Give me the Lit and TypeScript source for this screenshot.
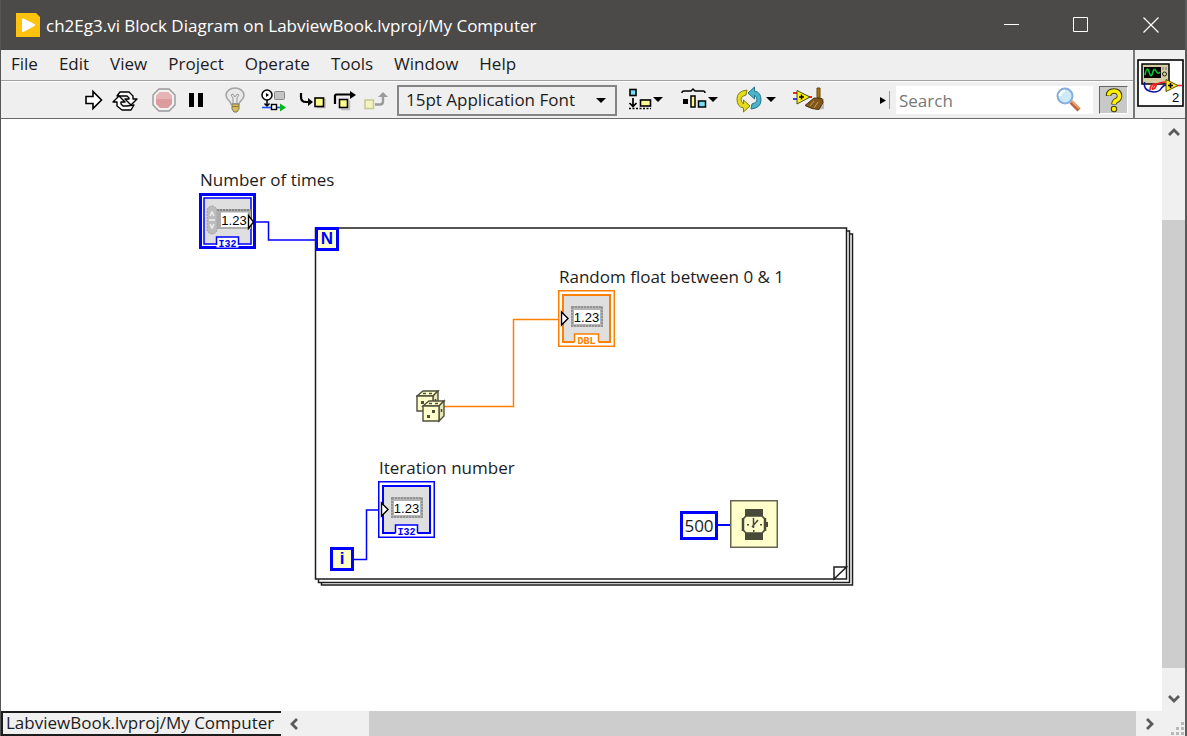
import { LitElement, html, svg, css } from "lit";
import { customElement, property } from "lit/decorators.js";

const MENUS = ["File", "Edit", "View", "Project", "Operate", "Tools", "Window", "Help"];

const caret = (x: number) => svg`<path d="M${x} 11h10l-5 5z" fill="#000"/>`;

const ICONS: Record<string, unknown> = {
  run: svg`<path d="M9 10.500h7v-5l8.500 8.500-8.500 8.500v-5H9z" fill="#fff" stroke="#000" stroke-width="1.6"/>`,
  cont: svg`<g fill="#fff" stroke="#000" stroke-width="1.4" stroke-linejoin="round">
    <path d="M8 10l3-4h9l4 4v3h4l-6 6-6-6h4v-1l-2-2h-4z"/>
    <path d="M25 19l-3 5h-9l-5-4v-4H4l6-6 6 6h-4v2l2 2h4z"/></g>`,
  abort: svg`<path d="M11 3h10l6 6v10l-6 6H11l-6-6V9z" fill="#f2f2f2" stroke="#999" stroke-width="1.4"/>
    <path d="M12 6h8l4 4v8l-4 4h-8l-4-4v-8z" fill="#dc9c9e"/><path d="M12 6h8l4 4v3H8v-3z" fill="#e6b4b5"/>`,
  pause: svg`<path d="M9 7h5v14H9zM18 7h5v14h-5z" fill="#000"/>`,
  bulb: svg`<path d="M12 18c0-3-5-4-5-9a9 7 0 0 1 18 0c0 5-5 6-5 9z" fill="#e9e9e9" stroke="#a3a3a3" stroke-width="1.6"/>
    <path d="M14 17v-5l-2-3 2-1 2 3 2-3 2 1-2 3v5" fill="none" stroke="#999"/>
    <path d="M13 18h7v5l-2 3h-3l-2-3z" fill="#d8bd4c" stroke="#777"/><path d="M13 20.500h7" stroke="#8a7a3a"/>`,
  retain: svg`<circle cx="9" cy="9" r="5" fill="#fff" stroke="#000" stroke-width="1.500"/><path d="M8 7v4l3-2z" fill="#000"/>
    <rect x="16.500" y="5.500" width="10" height="8" rx="1" fill="#c4c4c4" stroke="#888"/>
    <path d="M9 14v6M6.500 17.500L9 20l2.500-2.500" fill="none" stroke="#000" stroke-width="1.500"/>
    <path d="M4 21.500h20" stroke="#1f4fff" stroke-width="1.600"/>
    <rect x="13.500" y="18.500" width="5" height="5" fill="#fff" stroke="#000" stroke-width="1.400"/><path d="M22 17.500l6 4-6 4z" fill="#00b818"/>`,
  into: svg`<path d="M4 7v4q0 5 5 5h6" fill="none" stroke="#000" stroke-width="2.200"/><path d="M11 12l5 4-5 4z" fill="#000"/>
    <path d="M20 21.500h8v-9" stroke="#bbb" fill="none" stroke-width="1.500"/><rect x="18" y="12" width="8.500" height="8.500" fill="#ffff8c" stroke="#000" stroke-width="1.600"/>`,
  over: svg`<path d="M6 18V9.500l1-1h15" fill="none" stroke="#000" stroke-width="2.200"/><path d="M21 5l6 4-6 4z" fill="#000"/>
    <path d="M12 23.500h8.500v-9" stroke="#bbb" fill="none" stroke-width="1.500"/><rect x="10.500" y="13.500" width="8" height="8" fill="#ffff8c" stroke="#000" stroke-width="1.600"/>`,
  out: svg`<rect x="4" y="14" width="8.500" height="8.500" fill="#f3f3bd" stroke="#c9c99a" stroke-width="1.600"/>
    <path d="M14 18.500h5q3 0 3-3V9" fill="none" stroke="#9b9b9b" stroke-width="2.400"/><path d="M17 11l5-5 5 5z" fill="#9b9b9b"/>`,
  align: svg`<rect x="5" y="3.500" width="6" height="6" fill="#6fe0f5" stroke="#000" stroke-width="1.600"/>
    <path d="M8 12v8M4.500 17L8 20.500l3.500-3.500" fill="none" stroke="#000" stroke-width="1.700"/>
    <rect x="15.500" y="14" width="10" height="6" fill="#fdf793" stroke="#000" stroke-width="1.600"/>
    <path d="M4 22.500h22" stroke="#000" stroke-width="1.500" stroke-dasharray="2 1.500"/>${caret(28)}`,
  spread: svg`<path d="M3 7q0-2 2-2h7l2-2 2 2h8q2 0 2 2" fill="none" stroke="#000" stroke-width="1.500"/>
    <path d="M4 13h5v5H4z" fill="#000"/><rect x="12" y="10" width="4" height="11" fill="#fdf793" stroke="#000" stroke-width="1.500"/>
    <rect x="19.500" y="15" width="7" height="6" fill="#6fe0f5" stroke="#000" stroke-width="1.500"/>${caret(29)}`,
  order: svg`<g stroke-linejoin="round"><path d="M14 4Q4 5 4 13q0 8 6.500 9v4l6.500-6-6.500-6v4Q8 16 8 13t5-4z" fill="#e6dc1c" stroke="#82800c"/>
    <path d="M14 4Q4 5 4 13q0 8 6.500 9v4l6.500-6-6.500-6v4Q8 16 8 13t5-4z" transform="rotate(180 16 13.500)" fill="#4cb3c9" stroke="#237487"/></g>${caret(33)}`,
  clean: svg`<path d="M6 7h4M21 11h4" stroke="#f22" stroke-width="1.800"/><path d="M6 13h4" stroke="#22f" stroke-width="1.800"/>
    <path d="M29 24l8-1V12z" fill="#bbb"/><path d="M10 4.500l13 6.500-13 7z" fill="#f8f01c" stroke="#4d4a10"/><path d="M12 11h5M14.500 8.500v5" stroke="#000" stroke-width="1.500"/>
    <path d="M30 2h3v10h-3z" fill="#a87a18" stroke="#694705"/><path d="M27 12l8 .5 1 4-4 7q-7 0-14-4z" fill="#82581a" stroke="#51350d"/>
    <path d="M27 15l-4 5M31 16l-4 6" stroke="#bfa06a"/>`,
};

interface DiagramNode {
  kind: "control" | "indicator" | "box" | "wait" | "dice";
  x: number;
  y: number;
  text?: string;
  label?: string;
  tone?: string;
  wide?: boolean;
}

const NODES: DiagramNode[] = [
  { kind: "control", x: 198, y: 74, label: "Number of times", text: "I32", tone: "#0000ff" },
  { kind: "indicator", x: 557, y: 171, label: "Random float between 0 & 1", text: "DBL", tone: "#ff8000" },
  { kind: "indicator", x: 377, y: 362, label: "Iteration number", text: "I32", tone: "#0000ff" },
  { kind: "box", x: 314, y: 108, text: "N" },
  { kind: "box", x: 329, y: 428, text: "i" },
  { kind: "box", x: 679, y: 392, text: "500", wide: true },
  { kind: "wait", x: 729, y: 381 },
  { kind: "dice", x: 415, y: 271 },
];

@customElement("menu-bar")
export class MenuBar extends LitElement {
  static styles = css`
    :host { display: block; border-bottom: 1px solid #a0a0a0; }
    .bar { display: flex; gap: 1px; height: 30px; align-items: start; }
    .item { border: 0; background: none; padding: 0 10px; height: 26px; font: inherit; color: #1c1c1c; }
  `;
  render() {
    return html`<nav class="bar">${MENUS.map((m) => html`<button class="item">${m}</button>`)}</nav>`;
  }
}

@customElement("tool-bar")
export class ToolBar extends LitElement {
  static styles = css`
    :host { display: block; border-top: 1px solid #fff; border-bottom: 1px solid #6c6c6c; }
    .bar { display: flex; height: 36px; align-items: center; padding: 0 5px 0 76px; }
    .groups { display: flex; gap: 7px; margin-right: 4px; }
    .group { display: flex; }
    .tool { border: 0; padding: 0; background: none; width: 32px; height: 28px; display: block; }
    .menu { width: 54px; }
    .tool svg { display: block; margin: auto; }
    .font { position: relative; display: block; flex: 0 1 220px; min-width: 0; margin-right: 4px; }
    .pick { appearance: none; box-sizing: border-box; width: 100%; height: 31px; border: 2px solid #858585;
      background: #efefef; border-radius: 0; padding: 0 0 2px 7px; font: inherit; color: #1c1c1c; }
    .arrow { position: absolute; right: 11px; top: 13px; pointer-events: none; }
    .space { flex: 1; }
    .more { border: 0; border-right: 1px solid #999; background: none; padding: 0; width: 10px; height: 18px; margin-right: 6px; }
    .more svg { display: block; }
    .search { display: flex; align-items: center; flex: 0 1 197px; min-width: 0; height: 28px; background: #fff; margin-right: 6px; }
    .query { flex: 1; min-width: 0; border: 0; background: none; padding: 0 0 0 3px; font: inherit; outline: 0; }
    .query::placeholder { color: #777; opacity: 1; }
    .glass { flex: none; margin-right: 11px; }
    .help { flex: none; box-sizing: border-box; width: 29px; height: 28px; padding: 0; background: #c8c8c8; border: 1px solid #fff;
      border-top-color: #666; border-left-color: #666; }
    .help svg { display: block; margin: auto; }
  `;
  private tool(name: string, title: string, menu = false) {
    const w = menu ? 46 : 32;
    return html`<button class="tool ${menu ? "menu" : ""}" aria-label=${title}>
      <svg width=${w} height="28" viewBox="0 0 ${w} 28">${ICONS[name]}</svg></button>`;
  }
  render() {
    return html`<div class="bar" role="toolbar">
      <div class="groups">
        <div class="group">${this.tool("run", "Run")}${this.tool("cont", "Run Continuously")}</div>
        <div class="group">${this.tool("abort", "Abort Execution")}${this.tool("pause", "Pause")}</div>
        <div class="group">${this.tool("bulb", "Highlight Execution")}</div>
        <div class="group">${this.tool("retain", "Retain Wire Values")}</div>
        <div class="group">${this.tool("into", "Step Into")}${this.tool("over", "Step Over")}${this.tool("out", "Step Out")}</div>
      </div>
      <label class="font"><select class="pick" aria-label="Text Settings"><option>15pt Application Font</option></select>
        <svg class="arrow" width="10" height="6" viewBox="0 0 10 6"><path d="M0 0h10L5 5z"/></svg></label>
      <div class="group">
        ${this.tool("align", "Align Objects", true)}${this.tool("spread", "Distribute Objects", true)}
        ${this.tool("order", "Reorder", true)}${this.tool("clean", "Clean Up Diagram", true)}
      </div>
      <div class="space"></div>
      <button class="more" aria-label="More"><svg width="8" height="18" viewBox="0 0 8 18"><path d="M0 6l6 3.500-6 3.500z"/></svg></button>
      <label class="search"><input class="query" type="text" placeholder="Search" aria-label="Search" />
        <svg class="glass" width="26" height="26" viewBox="0 0 26 26">
          <path d="M15 15l8 8" stroke="#b9644a" stroke-width="4.500"/><path d="M15 13.500l8.500 8" stroke="#f0a060" stroke-width="2"/>
          <circle cx="9" cy="9" r="7.500" fill="#cdeafa" stroke="#87aedb" stroke-width="2"/>
          <path d="M4 9a5 5 0 0 1 5-5" stroke="#fff" stroke-width="2.500" fill="none"/></svg></label>
      <button class="help" aria-label="Context Help"><svg width="20" height="25" viewBox="0 0 20 25">
        <path d="M4.500 8q0-5 5.500-5t5.500 5q0 3-3 4.500-2.500 1-2.500 4" fill="none" stroke="#403d00" stroke-width="5.500"/>
        <circle cx="10" cy="21" r="3.200" fill="#403d00"/>
        <path d="M4.500 7.500q.5-4.500 5.500-4.500t5.500 5q0 3-3 4.500-2.500 1-2.500 3.500" fill="none" stroke="#fff200" stroke-width="3.600"/>
        <circle cx="10" cy="21" r="2.200" fill="#fff200"/></svg></button>
    </div>`;
  }
}

@customElement("block-diagram")
export class BlockDiagram extends LitElement {
  static styles = css`
    :host { display: block; position: relative; overflow: hidden; background: #fff; min-width: 0; min-height: 0; }
    .wires { position: absolute; left: 0; top: 0; width: 100%; height: 100%; }
    .node { position: absolute; }
    .node svg { display: block; }
    .label { position: absolute; left: 1px; bottom: 100%; white-space: nowrap; line-height: 26px; color: #1c1c1c; }
    .box { box-sizing: border-box; width: 24px; height: 24px; border: 3px solid #0000ff; background: #ffffcc; color: #0000ff;
      font: bold 17px/18px "Liberation Sans", Arial, sans-serif; text-align: center; }
    .wide { width: 38px; height: 29px; background: #fff; color: #1c1c1c; font: inherit; line-height: 23px; }
    .digits { font: 13px "Liberation Sans", Arial, sans-serif; }
    .tag { font: bold 10px "Liberation Mono", monospace; }
  `;

  private terminal(n: DiagramNode) {
    const control = n.kind === "control";
    const w = n.text === "DBL" ? 24 : 22;
    return html`<svg width="57" height="57" viewBox="0 0 57 57" role="img">
      <rect x=${control ? 1.5 : 0.75} y=${control ? 1.5 : 0.75} width=${control ? 54 : 55.5} height=${control ? 53 : 55.5}
        fill="#fff" stroke=${n.tone} stroke-width=${control ? 3 : 1.5}/>
      <rect x="5" y="5" width="47" height=${control ? 46 : 47} fill="#dfdfdf" stroke=${n.tone} stroke-width=${control ? 1.5 : 2}/>
      ${control
        ? svg`<rect x="18" y="16" width="34" height="20" fill="#adadad"/><path d="M18 17h34" stroke="#858585" stroke-width="2" stroke-dasharray="2 1"/>
          <rect x="22" y="19.500" width="27" height="14.500" fill="#fff"/>
          <rect x="8" y="13" width="10" height="28" rx="5" fill="#bcbcbc" stroke="#a0a0a0" stroke-dasharray="2 1"/>
          <path d="M11 23l2-4 2 4M11 31l2 4 2-4M10 27h6" fill="none" stroke="#eee" stroke-width="1.500"/>
          <path d="M49.500 22.500v13l5-6.500z" fill="#fff" stroke="#000" stroke-width="1.400"/>`
        : svg`<rect x="13" y="16" width="32" height="21" fill="#b4b4b4"/><rect x="14" y="17" width="30" height="19" fill="none" stroke="#949494" stroke-width="2" stroke-dasharray="2 1"/>
          <rect x="16" y="20" width="26" height="14" fill="#fff"/>
          <path d="M3.500 22v13l6.500-6.500z" fill="#fff" stroke="#000" stroke-width="1.400"/>`}
      <text class="digits" x=${control ? 35 : 28.5} y="32" text-anchor="middle">1.23</text>
      <rect x=${28.5 - w / 2} y="44" width=${w} height="10.500" fill="#fff"/>
      <path d="M${28.5 - w / 2} 52v-8h${w}v8" fill="none" stroke=${n.tone} stroke-width="1.500"/>
      <text class="tag" x="28.500" y="53.500" text-anchor="middle" fill=${n.tone}>${n.text}</text>
    </svg>`;
  }

  private wait() {
    return html`<svg width="48" height="48" viewBox="0 0 48 48" role="img" aria-label="Wait">
      <rect x=".750" y=".750" width="46.500" height="46.500" fill="#ffffcc" stroke="#66664f" stroke-width="1.500"/>
      <path d="M15 9h18v7H15zM15 33h18v7H15z" fill="#4a4a3a"/>
      <path d="M16 16h16l3 3v11l-3 3H16l-3-3V19z" fill="#ffffcc" stroke="#4a4a3a" stroke-width="1.600"/>
      <path d="M13 18v13M35 18v13" stroke="#4a4a3a" stroke-width="2.500"/>
      <path d="M36 22h2v5h-2zM17 24h2v1.500h-2zM30 24h2v1.500h-2zM23 30h1.500v2H23z" fill="#4a4a3a"/>
      <path d="M23.500 18v10M22 27l6-7" stroke="#4a4a3a" stroke-width="1.500"/></svg>`;
  }

  private dice() {
    const die = (x: number, y: number) => svg`<g transform="translate(${x} ${y})" stroke="#4f4f3a" stroke-width="1.400">
      <path d="M1 6l6-5h15l-5 5z" fill="#ffffcc"/><path d="M17 6l5-5v15l-5 5z" fill="#e8e8b8"/>
      <path d="M1 6h16v15H1z" fill="#ffffcc"/><path d="M7 3.500h3M13 3.500h3M19.500 9v3" stroke-width="1.600"/></g>`;
    return html`<svg width="30" height="33" viewBox="0 0 30 33" role="img" aria-label="Random Number">
      ${die(0, 0)}${die(6, 10)}
      <path d="M5 11h3v3H5zM16 20h3v3h-3zM11 25h3v3h-3z" fill="#4f4f3a"/></svg>`;
  }

  private body(n: DiagramNode) {
    if (n.kind === "box") return html`<div class="box ${n.wide ? "wide" : ""}">${n.text}</div>`;
    if (n.kind === "wait") return this.wait();
    if (n.kind === "dice") return this.dice();
    return this.terminal(n);
  }

  render() {
    return html`
      <svg class="wires" fill="none" stroke="#1c1c1c" stroke-width="1.500">
        <path d="M320.500 463.500v2.500h531V115h-3M317.500 460.500v3h531V112h-3"/>
        <rect x="314.500" y="109" width="531" height="351" fill="#fff"/>
        <path d="M845.500 448h-12.500v12z"/>
        <path d="M255 103h12.500v18H314M352 440.500h13.500V391H377" stroke="#0000ff"/>
        <path d="M717 406h12" stroke="#0000ff" stroke-width="2"/>
        <path d="M443 287.500h69.500V200.500H557" stroke="#ff8000"/>
      </svg>
      ${NODES.map((n) => html`<div class="node" style="left:${n.x}px;top:${n.y}px">
        ${n.label ? html`<span class="label">${n.label}</span>` : ""}${this.body(n)}</div>`)}`;
  }
}

@customElement("scroll-bar")
export class ScrollBar extends LitElement {
  @property({ type: Boolean, reflect: true }) vertical = false;
  @property({ type: Number }) start = 0;
  @property({ type: Number }) size = 50;
  static styles = css`
    :host { display: flex; flex: 1; min-width: 0; min-height: 0; background: #f0f0f0; }
    :host([vertical]) { flex-direction: column; }
    .step { flex: none; width: 26px; height: 100%; border: 0; background: none; padding: 0; }
    :host([vertical]) .step { width: 100%; height: 26px; }
    .step svg { display: block; margin: auto; }
    .track { flex: 1; position: relative; }
    .thumb { position: absolute; background: #cdcdcd; inset: 0; }
  `;
  private arrow(d: string, name: string) {
    return html`<button class="step" aria-label=${name}><svg width="14" height="14" viewBox="0 0 14 14">
      <path d=${d} fill="none" stroke="#5a5a5a" stroke-width="2.800"/></svg></button>`;
  }
  render() {
    const end = 100 - this.start - this.size;
    const place = this.vertical ? `top:${this.start}%;bottom:${end}%` : `left:${this.start}%;right:${end}%`;
    return html`${this.vertical ? this.arrow("M2 10l5-5 5 5", "Scroll up") : this.arrow("M10 2L5 7l5 5", "Scroll left")}
      <div class="track"><div class="thumb" style=${place}></div></div>
      ${this.vertical ? this.arrow("M2 5l5 5 5-5", "Scroll down") : this.arrow("M5 2l5 5-5 5", "Scroll right")}`;
  }
}

@customElement("app-root")
export class AppRoot extends LitElement {
  static styles = css`
    :host { display: flex; flex-direction: column; box-sizing: border-box; height: 100vh; border-left: 1px solid #555;
      border-right: 2px solid #5a5a5a; background: #efefef; font: 17px "Open Sans", "Noto Sans", sans-serif; overflow: hidden; }
    .title { display: flex; align-items: center; flex: none; height: 50px; background: #4c4a48; color: #fff; padding-left: 15px; }
    .logo { flex: none; margin-right: 6px; }
    .name { flex: 1; min-width: 0; margin: 0; font: inherit; white-space: nowrap; overflow: hidden; text-overflow: ellipsis; }
    .win { width: 70px; height: 50px; border: 0; padding: 0; background: none; }
    .win svg { display: block; margin: 0 0 0 28px; }
    .head { display: flex; flex: none; }
    .bars { flex: 1; min-width: 0; }
    .pane { box-sizing: border-box; width: 52px; border-left: 2px solid #777; border-bottom: 1px solid #6c6c6c; padding: 9px 0 0 2px; }
    .pane svg { display: block; }
    .vinum { font: 13px "Liberation Sans", Arial, sans-serif; }
    .main { display: flex; flex: 1; min-height: 0; }
    .main block-diagram { flex: 1; }
    .side { display: flex; flex-direction: column; flex: none; width: 23px; }
    .foot { display: flex; flex: none; height: 25px; background: #f0f0f0; }
    .target { box-sizing: border-box; border: 2px solid #1c1c1c; border-right: 0; padding: 0 7px 0 3px; line-height: 20px; white-space: nowrap; color: #1c1c1c; }
    .grip { flex: none; align-self: end; margin-left: 9px; }
  `;
  render() {
    return html`
      <header class="title">
        <svg class="logo" width="24" height="24" viewBox="0 0 24 24"><path d="M0 0h20l4 4v20H0z" fill="#ffc20e"/>
          <path d="M7 6.500l11 5.500-11 6z" fill="#fff" stroke="#fff" stroke-width="2" stroke-linejoin="round"/></svg>
        <h1 class="name">ch2Eg3.vi Block Diagram on LabviewBook.lvproj/My Computer</h1>
        <button class="win" aria-label="Minimize"><svg width="16" height="16"><path d="M1 7.500h15" stroke="#fff"/></svg></button>
        <button class="win" aria-label="Maximize"><svg width="16" height="16"><path d="M.5.5h14v14H.5z" fill="none" stroke="#fff"/></svg></button>
        <button class="win" aria-label="Close"><svg width="16" height="16"><path d="M.5.500l15 15M15.500.500l-15 15" stroke="#fff" stroke-width="1.200"/></svg></button>
      </header>
      <div class="head">
        <div class="bars"><menu-bar></menu-bar><tool-bar></tool-bar></div>
        <div class="pane"><svg width="47" height="48" viewBox="0 0 47 48" role="img" aria-label="VI icon">
          <rect x="1" y="1" width="45" height="46" fill="#fff" stroke="#000" stroke-width="1.600"/>
          <path d="M5 5h27v20H5z" fill="#d5cda5" stroke="#000" stroke-width="1.500"/><path d="M7 8h17v11H7z" fill="#000"/>
          <path d="M8 16q2-10 4-3t3.500 1 3.500-2 4 1" fill="none" stroke="#0c3" stroke-width="1.500"/>
          <circle cx="27.500" cy="15" r="2" fill="none" stroke="#222"/><path d="M26 8v3M29 8v3" stroke="#777"/>
          <path d="M7.500 23v4q1 5 9 6 6 0 8-4 2-3 5-3" fill="none" stroke="#1212a8" stroke-width="1.600"/>
          <path d="M13 31q0-5 4-6t1 4q-4 3-2-1t12-5" fill="none" stroke="#e22" stroke-width="1.600"/>
          <path d="M39 26.500h6" stroke="#e22" stroke-width="1.500"/><path d="M29 20.500l12 6-12 6z" fill="#fbea1a" stroke="#554c00"/>
          <path d="M31 26.500h5M33.500 24v5" stroke="#000" stroke-width="1.500"/><text class="vinum" x="35" y="43">2</text></svg></div>
      </div>
      <div class="main">
        <block-diagram></block-diagram>
        <div class="side"><scroll-bar vertical .start=${13.9} .size=${83}></scroll-bar></div>
      </div>
      <footer class="foot">
        <div class="target">LabviewBook.lvproj/My Computer</div>
        <scroll-bar .start=${7.4} .size=${92.6}></scroll-bar>
        <svg class="grip" width="14" height="14" viewBox="0 0 14 14"><path d="M10 0h3v3h-3zM5 5h3v3H5zM10 5h3v3h-3zM0 10h3v3H0zM5 10h3v3H5zM10 10h3v3h-3z" fill="#b8b8b8"/></svg>
      </footer>`;
  }
}
